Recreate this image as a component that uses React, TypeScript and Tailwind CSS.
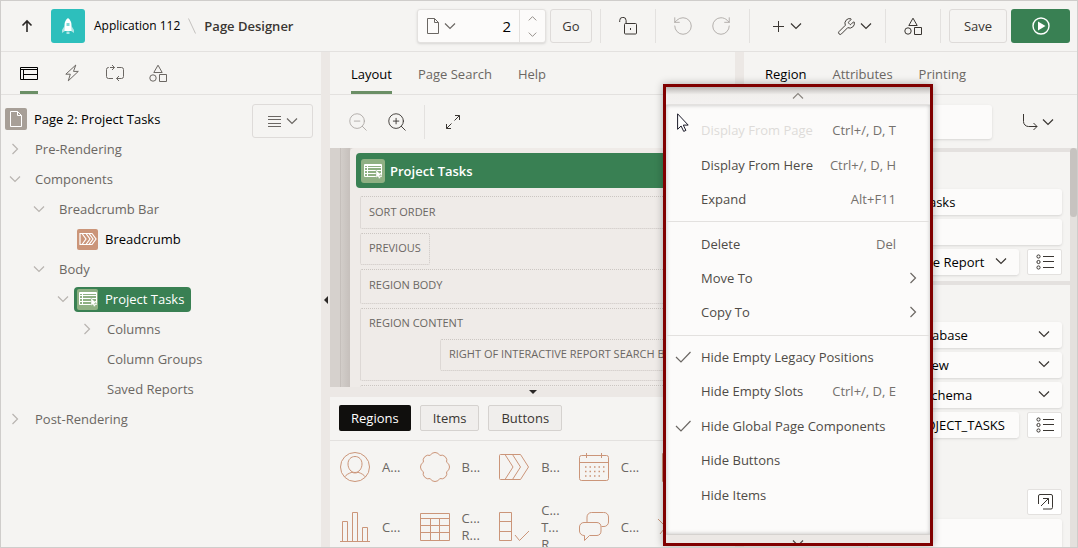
import React from "react";
import { RotateCcw, RotateCw, Wrench, ZoomIn, ZoomOut } from "lucide-react";

type IconProps = { className?: string };
type ChevronProps = { dir?: "up" | "down" | "right"; className?: string };

const CHEVRON_PATHS = {
  up: "M1 8.5l5-5 5 5",
  down: "M1 3.5l5 5 5-5",
  right: "M3.5 1l5 5-5 5",
};

const Chevron = ({ dir = "down", className = "size-3" }: ChevronProps) => (
  <svg viewBox="0 0 12 12" className={`shrink-0 ${className}`} fill="none" stroke="currentColor" strokeWidth="1.2">
    <path d={CHEVRON_PATHS[dir]} />
  </svg>
);

const ShapesIcon = ({ className = "" }: IconProps) => (
  <svg viewBox="0 0 18 18" className={`size-[18px] ${className}`} fill="none" stroke="currentColor">
    <path d="M9 1.2L13.2 8.5H4.8z" />
    <circle cx="4" cy="14" r="3.2" />
    <path d="M10.5 10.5h7v7h-7z" />
  </svg>
);

const PageIcon = ({ className = "" }: IconProps) => (
  <svg viewBox="0 0 14 18" className={`w-[14px] h-[18px] ${className}`} fill="none" stroke="currentColor">
    <path d="M1.5 1.5h7l4 4v11h-11zM8.5 1.5v4h4" />
  </svg>
);

const ReportIcon = () => (
  <svg viewBox="0 0 18 16" className="w-[18px] h-4" fill="none" stroke="#fff">
    <path d="M.5 1.5h17v12H.5zM.5 2.5h17M.5 4.5h17M.5 7.5h17M.5 10.5h17M3.5 1.5v12" />
    <path d="M12 7v7.8l1.8-1.6 1.2 2.6 1.6-.7-1.2-2.6h2.4z" fill="#fff" stroke="#8fb083" strokeWidth=".4" />
  </svg>
);

const ListIcon = () => (
  <svg viewBox="0 0 18 16" className="w-[18px] h-4" fill="none" stroke="currentColor">
    <circle cx="2.5" cy="2.5" r="1.6" />
    <circle cx="2.5" cy="8" r="1.6" />
    <circle cx="2.5" cy="13.5" r="1.6" />
    <path d="M7 2.5h11M7 7.5h11M7 13.5h11" />
  </svg>
);

const Divider = () => <span className="w-px h-[34px] bg-[#e3e1df]" />;

const Header = () => (
  <header className="flex items-center h-[51px] shrink-0 border-b border-[#e3e1df] pr-[7px]">
    <button aria-label="Up" className="ml-5 w-3 mr-[18px]">
      <svg viewBox="0 0 12 14" className="w-3 h-[14px]" fill="none" stroke="#2b2826" strokeWidth="1.6">
        <path d="M6 13V2M1.5 6.5L6 2l4.5 4.5" />
      </svg>
    </button>
    <span className="flex items-center justify-center size-[34px] rounded-[3px] bg-[#2dbfbc]">
      <svg viewBox="0 0 14 18" className="w-[14px] h-[18px]">
        <path d="M3.5 9L1 13v3l3-2zM10.5 9L13 13v3l-3-2z" fill="#a9e5e3" />
        <path d="M7 1c2.5 2 3.5 4 3.5 7v6h-7V8c0-3 1-5 3.5-7z" fill="#fff" />
        <path d="M5.5 6h3v3h-3z" fill="#7fd8d6" />
        <path d="M5.5 14.5h3v2.5h-3z" fill="#a9e5e3" />
      </svg>
    </span>
    <nav className="flex items-center ml-[9px] gap-2">
      <a href="#app" className="text-xs text-black">Application 112</a>
      <svg viewBox="0 0 8 16" className="w-2 h-4" stroke="#c4c1be">
        <path d="M.5.5l7 15" />
      </svg>
      <h1 className="font-semibold text-[#3a3632]">Page Designer</h1>
    </nav>

    <div className="flex items-center ml-auto text-[#3a3632]">
      <div className="flex items-stretch h-[34px] w-[129px] bg-[#fcfbfa] border border-[#e3e1df] rounded-[3px] shadow-sm">
        <button aria-label="Recent pages" className="flex items-center gap-1 pl-2 text-[#6b6763]">
          <PageIcon />
          <Chevron />
        </button>
        <input aria-label="Page number" defaultValue="2" className="flex-1 min-w-0 pr-2 text-right text-[15px] text-black bg-transparent" />
        <span className="flex flex-col justify-around items-center w-[26px] border-l border-[#e3e1df] text-[#8b8680]">
          <button aria-label="Next page" className="flex"><Chevron dir="up" className="size-[9px]" /></button>
          <button aria-label="Previous page" className="flex"><Chevron className="size-[9px]" /></button>
        </span>
      </div>
      <button className="ml-1 h-[34px] w-[42px] border border-[#dedbd9] rounded-[3px]">Go</button>
      <span className="ml-2 flex"><Divider /></span>
      <button aria-label="Unlock" className="flex justify-center w-[54px]">
        <svg viewBox="0 0 18 18" className="size-[18px]" fill="none" stroke="currentColor">
          <rect x="5.5" y="6.5" width="12" height="10.5" rx="1" />
          <path d="M.7 5V3.5a3.2 3.2 0 016.4 0v3M11.5 11v2" />
        </svg>
      </button>
      <Divider />
      <button aria-label="Undo" className="flex justify-center w-[38px] ml-2 text-[#aeaaa6]"><RotateCcw size={22} strokeWidth={1} /></button>
      <button aria-label="Redo" className="flex justify-center w-[38px] mr-[9px] text-[#aeaaa6]"><RotateCw size={22} strokeWidth={1} /></button>
      <Divider />
      <button aria-label="Create" className="flex items-center justify-center gap-[6px] w-[74px]">
        <svg viewBox="0 0 11 11" className="size-[11px]" stroke="currentColor">
          <path d="M5.5 0v11M0 5.5h11" />
        </svg>
        <Chevron />
      </button>
      <button aria-label="Utilities" className="flex items-center justify-center gap-1 w-[61px]">
        <Wrench size={19} strokeWidth={1.2} />
        <Chevron />
      </button>
      <Divider />
      <button aria-label="Shared Components" className="flex justify-center w-[54px]"><ShapesIcon /></button>
      <Divider />
      <button className="ml-2 h-[34px] w-[58px] border border-[#dedbd9] rounded-[3px]">Save</button>
      <button aria-label="Save and Run Page" className="ml-1 flex items-center justify-center h-[34px] w-[59px] rounded-[3px] bg-[#398053]">
        <svg viewBox="0 0 18 18" className="size-[18px]" fill="none" stroke="#fff" strokeWidth="1.4">
          <circle cx="9" cy="9" r="8" />
          <path d="M6 4.5l7.5 4.5L6 13.5z" fill="#fff" stroke="none" />
        </svg>
      </button>
    </div>
  </header>
);

const Tabs = ({ items }: { items: string[] }) => (
  <div role="tablist" className="flex items-stretch gap-[26px] h-[43px] shrink-0 border-b border-[#e3e1df] pl-[21px] text-[#6b6763]">
    {items.map((item, i) => (
      <button
        key={item}
        role="tab"
        className={i === 0 ? "pt-[5px] text-black border-b-[3px] border-[#6b8f66]" : "pt-[5px] border-b-[3px] border-transparent"}
      >
        {item}
      </button>
    ))}
  </div>
);

type TreeRow = { label: string; pad: string; arrow?: "down" | "right"; icon?: "crumb" | "report" };

const TREE: TreeRow[] = [
  { label: "Pre-Rendering", pad: "pl-[8px]", arrow: "right" },
  { label: "Components", pad: "pl-[8px]", arrow: "down" },
  { label: "Breadcrumb Bar", pad: "pl-[32px]", arrow: "down" },
  { label: "Breadcrumb", pad: "pl-[56px]", icon: "crumb" },
  { label: "Body", pad: "pl-[32px]", arrow: "down" },
  { label: "Project Tasks", pad: "pl-[56px]", arrow: "down", icon: "report" },
  { label: "Columns", pad: "pl-[80px]", arrow: "right" },
  { label: "Column Groups", pad: "pl-[80px]" },
  { label: "Saved Reports", pad: "pl-[80px]" },
  { label: "Post-Rendering", pad: "pl-[8px]", arrow: "right" },
];

const TreeLabel = ({ row }: { row: TreeRow }) => {
  if (row.icon === "crumb") {
    return (
      <span className="flex items-center gap-[7px] ml-2 text-black">
        <span className="flex items-center justify-center size-[21px] rounded-[2px] bg-[#cb9579]">
          <svg viewBox="0 0 18 14" className="w-[18px] h-[14px]" fill="none" stroke="#fff" strokeWidth="1.2">
            <path d="M1 1.5h12l4 5.5-4 5.5H1zM3 1.5L7 7l-4 5.5M7 1.5L11 7l-4 5.5M10 1.5L14 7l-4 5.5" />
          </svg>
        </span>
        {row.label}
      </span>
    );
  }
  if (row.icon === "report") {
    return (
      <span className="flex items-center gap-[7px] ml-[5px] h-[25px] pl-[3px] pr-[7px] rounded-[4px] bg-[#398053] font-medium text-white">
        <span className="flex items-center justify-center size-[21px] rounded-[2px] bg-[#8fb083]">
          <ReportIcon />
        </span>
        {row.label}
      </span>
    );
  }
  return <span className="ml-[14px]">{row.label}</span>;
};

const TreePanel = () => (
  <aside className="flex flex-col w-[320px] shrink-0">
    <div className="flex items-stretch gap-[25px] h-[43px] shrink-0 border-b border-[#e3e1df] pl-[19px] text-[#6b6763]">
      <button aria-label="Rendering" className="flex items-center w-[18px] pt-[2px] border-b-[3px] border-[#6b8f66] text-black">
        <svg viewBox="0 0 18 14" className="w-[18px] h-[14px]" fill="none" stroke="currentColor">
          <path d="M.5 1.5h17v12H.5zM.5 3.5h17M3.5 3.5v10M3.5 8.5h14" />
        </svg>
      </button>
      <button aria-label="Dynamic Actions" className="flex items-center justify-center w-[18px]">
        <svg viewBox="0 0 14 18" className="w-[14px] h-[18px]" fill="none" stroke="currentColor">
          <path d="M10.8 1L.8 10.2h4.5L3.3 16.8l10-9.4H8.500z" />
        </svg>
      </button>
      <button aria-label="Processing" className="flex items-center">
        <svg viewBox="0 0 18 18" className="size-[18px]" fill="none" stroke="currentColor">
          <path d="M3 3.5h-.5a2 2 0 00-2 2v7a2 2 0 002 2H7M4 3.5h4.5M6 1l2.5 2.5L6 6M11 3.5h4.5a2 2 0 012 2v7a2 2 0 01-2 2h-5M13 12l-2.5 2.5L13 17" />
        </svg>
      </button>
      <button aria-label="Page Shared Components" className="flex items-center"><ShapesIcon /></button>
    </div>
    <div className="flex items-center pl-1 pr-2 pt-[9px]">
      <span className="flex items-center justify-center size-[22px] mb-1 rounded-[2px] bg-[#a79f97] text-white">
        <PageIcon />
      </span>
      <span className="ml-[7px] mb-1 text-black">Page 2: Project Tasks</span>
      <button aria-label="Menu" className="flex items-center justify-center gap-[5px] ml-auto w-[61px] h-[34px] border border-[#dedbd9] rounded-[3px] text-[#6b6763]">
        <svg viewBox="0 0 13 11" className="w-[13px] h-[11px]" stroke="currentColor">
          <path d="M0 .5h13M0 3.5h13M0 7.5h13M0 10.5h13" />
        </svg>
        <Chevron />
      </button>
    </div>
    <ul className="-mt-1 text-[#6b6763]">
      {TREE.map((row) => (
        <li key={row.label} className={`flex items-center h-[30px] ${row.pad}`}>
          {row.arrow && <Chevron dir={row.arrow} className="size-3 text-[#b8b4b0]" />}
          {!row.arrow && <span className="w-3" />}
          <TreeLabel row={row} />
        </li>
      ))}
    </ul>
  </aside>
);

const Slot = ({ label, className = "" }: { label: string; className?: string }) => (
  <div className={`border border-dotted border-[#cbc6c2] rounded-[2px] px-2 text-[11px] text-[#6b6763] ${className}`}>{label}</div>
);

const Canvas = () => (
  <div className="flex flex-1 min-h-0 overflow-hidden bg-[#d6d1cd]">
    <div className="w-[11px] shrink-0 border-r border-[#c5bfbb]" />
    <div className="w-[9px] shrink-0 bg-linear-to-r from-[#d2cdc9] to-[#c6c0bc]" />
    <div className="flex-1 min-w-0 pl-[6px] pt-[5px] rounded-tl-[4px] bg-[#efebe8]">
      <div className="flex items-center h-[35px] pl-[5px] rounded-[4px] bg-[#398053] font-semibold text-white">
        <span className="flex items-center justify-center size-6 mr-[5px] rounded-[3px] bg-[#8fb083]">
          <ReportIcon />
        </span>
        Project Tasks
      </div>
      <div className="flex flex-col items-stretch gap-1 pl-1 pt-2">
        <Slot label="SORT ORDER" className="h-[33px] leading-[29px]" />
        <Slot label="PREVIOUS" className="h-[32px] leading-[28px] self-start" />
        <Slot label="REGION BODY" className="h-[35px] leading-[29px]" />
        <div className="flex flex-col h-[73px] border border-dotted border-[#cbc6c2] rounded-[2px] text-[11px] text-[#6b6763]">
          <span className="pl-2 leading-[28px] mb-[2px]">REGION CONTENT</span>
          <Slot label="RIGHT OF INTERACTIVE REPORT SEARCH BAR" className="ml-[79px] h-8 leading-[28px] whitespace-nowrap" />
        </div>
        <Slot label="" className="h-[33px] shrink-0" />
      </div>
    </div>
  </div>
);

const GALLERY: { name: string; lines: string[]; art: React.ReactNode }[] = [
  {
    name: "avatar",
    lines: ["A..."],
    art: (
      <>
        <circle cx="15" cy="15" r="14.5" />
        <path d="M15 4.5c4 0 7 3 7 7.5s-3 8.5-7 8.5-7-4-7-8.5 3-7.5 7-7.500zM4.5 25c2-2.5 4-3.5 7.5-4.8 1 1 5 1 6 0 3.5 1.3 5.5 2.3 7.5 4.8" />
      </>
    ),
  },
  {
    name: "badge",
    lines: ["B..."],
    art: (
      <path d="M10.2 3.4a5.4 5.4 0 019.6 0 5.4 5.4 0 016.8 6.800 5.4 5.400 0 010 9.600 5.400 5.400 0 01-6.800 6.800 5.400 5.400 0 01-9.600 0 5.400 5.400 0 01-6.800-6.800 5.400 5.400 0 010-9.600A5.400 5.400 0 0110.200 3.400z" />
    ),
  },
  {
    name: "breadcrumb",
    lines: ["B..."],
    art: <path d="M1.5 2.5h20l8 12.5-8 12.5h-20a1 1 0 01-1-1v-23a1 1 0 011-1zM6 2.5L14 15 6 27.5M13.5 2.5l8 12.5-8 12.5" />,
  },
  {
    name: "calendar",
    lines: ["C..."],
    art: (
      <>
        <rect x=".5" y="3.5" width="29" height="25" rx="2" />
        <path d="M.5 10.5h29M7.5 1v5M22.5 1v5" />
        <path d="M6 15h19.5M6 19.5h19.5M6 24h15" strokeDasharray="1.5 3" strokeWidth="1.5" />
      </>
    ),
  },
  { name: "cards", lines: ["C..."], art: <path d="M4.5 1.5h21v28h-21zM4.5 10.5h21M4.5 20.5h21" /> },
  {
    name: "chart",
    lines: ["C..."],
    art: <path d="M0 29.5h30M2.5 29.5v-20h5v20M12.5 29.5V.5h5v29M22.5 29.5v-14h5v14" />,
  },
  {
    name: "classic-report",
    lines: ["C...", "R..."],
    art: <path d="M.5 1.5h29v27H.5zM.5 6.5h29M.5 13.5h29M.5 20.5h29M10.5 6.5v22M19.5 6.5v22" />,
  },
  {
    name: "column-toggle",
    lines: ["C...", "T...", "R..."],
    art: <path d="M.5.5h12v28H.5zM.5 9.5h12M.5 19.5h12M16 23l4.5 5.5L30 19" />,
  },
  {
    name: "comments",
    lines: ["C..."],
    art: (
      <path d="M8 10V5a4.5 4.5 0 014.5-4.5h12A4.5 4.5 0 0129.5 5v5a4.5 4.5 0 01-4.5 4.5h-2.5M5 10.5h13a4.5 4.5 0 014 4.5v4a4.5 4.5 0 01-4 4.5h-7.5l-5 5v-5H5A4.5 4.5 0 01.5 19v-4A4.5 4.5 0 015 10.5z" />
    ),
  },
  { name: "data-profiler", lines: ["D..."], art: <path d="M0 7l6 6M2 22l4-5M26 7l-6 6M12 15h12" /> },
];

const GalleryPanel = () => (
  <section className="flex flex-col h-[150px] shrink-0 overflow-hidden">
    <div className="flex items-center gap-[9px] h-[44px] shrink-0 pl-[9px] pb-[2px] border-b border-[#e3e1df] text-[#3a3632]">
      <button className="h-[26px] px-3 rounded-[2px] bg-[#100f0d] font-medium text-white">Regions</button>
      <button className="h-[26px] px-3 rounded-[2px] border border-[#d5d2cf] bg-[#f0eeec]">Items</button>
      <button className="h-[26px] px-3 rounded-[2px] border border-[#d5d2cf] bg-[#f0eeec]">Buttons</button>
    </div>
    <div className="grid grid-cols-5 auto-rows-[60px] -mt-1 -mr-[3px] pl-[10px] text-[#6b6763]">
      {GALLERY.map((item) => (
        <div key={item.name} className="flex items-center gap-3">
          <svg viewBox="0 0 30 30" className="size-[30px] shrink-0" fill="none" stroke="#cb9579">
            {item.art}
          </svg>
          <span className="leading-[17px]">
            {item.lines.map((line, i) => (
              <span key={i} className="block">{line}</span>
            ))}
          </span>
        </div>
      ))}
    </div>
  </section>
);

const LayoutPanel = () => (
  <main className="flex flex-col flex-1 min-w-0">
    <Tabs items={["Layout", "Page Search", "Help"]} />
    <div className="flex items-center h-[53px] shrink-0 pl-[17px] text-[#3a3632]">
      <button aria-label="Zoom out" className="text-[#aeaaa6]"><ZoomOut size={22} strokeWidth={1} /></button>
      <button aria-label="Zoom in" className="ml-[17px] mr-4"><ZoomIn size={22} strokeWidth={1} /></button>
      <Divider />
      <button aria-label="Expand" className="ml-5">
        <svg viewBox="0 0 16 16" className="size-4" fill="none" stroke="currentColor">
          <path d="M9.5 6.5l5-5M10 1.5h4.5V6M6.5 9.5l-5 5M1.5 10v4.5H6" />
        </svg>
      </button>
    </div>
    <Canvas />
    <div className="flex items-center justify-center h-[10px] shrink-0 bg-[#ece8e5]">
      <svg viewBox="0 0 8 4" className="w-2 h-1" fill="#2b2826"><path d="M0 0h8L4 4z" /></svg>
    </div>
    <GalleryPanel />
  </main>
);

const FIELD = "h-[26px] bg-[#fcfbfa] rounded-[3px] shadow-sm text-black";

const SelectField = ({ label, value, className = "" }: { label: string; value: string; className?: string }) => (
  <label className={`relative flex min-w-0 ${className}`}>
    <span className="sr-only">{label}</span>
    <select className={`${FIELD} w-full appearance-none px-2`}>
      <option>{value}</option>
    </select>
    <Chevron className="absolute right-3 top-[6px] size-3 text-[#3a3632]" />
  </label>
);

const IconButton = ({ label, children }: { label: string; children: React.ReactNode }) => (
  <button aria-label={label} className="flex items-center justify-center w-[35px] h-[26px] ml-2 rounded-[2px] border border-[#e3e1df] bg-white text-[#3a3632]">
    {children}
  </button>
);

const PropertyPanel = () => (
  <aside className="flex flex-col w-[333px] shrink-0">
    <Tabs items={["Region", "Attributes", "Printing"]} />
    <div className="flex items-center h-[53px] shrink-0 pl-2 text-[#3a3632]">
      <input aria-label="Filter properties" className="h-[34px] w-[240px] bg-[#fcfbfa] rounded-[3px] shadow-sm" />
      <button aria-label="Go to group" className="flex items-center gap-1 ml-[30px]">
        <svg viewBox="0 0 16 16" className="size-4" fill="none" stroke="currentColor">
          <path d="M1.5 0v7.5a5 5 0 005 5H15M11.5 9l3.5 3.5-3.5 3.5" />
        </svg>
        <Chevron />
      </button>
    </div>
    <div className="flex flex-1 min-h-0">
      <div className="flex flex-col flex-1 min-w-0 overflow-hidden">
        <section className="flex flex-col gap-1 pt-[37px] pb-[6px] pl-[124px] pr-2 border-t-4 border-[#e4e1df]">
          <input aria-label="Title" defaultValue="Project Tasks" className={`${FIELD} px-2`} />
          <input aria-label="Source" className={`${FIELD} px-2`} />
          <div className="flex">
            <SelectField label="Type" value="Interactive Report" className="flex-1" />
            <IconButton label="Pick type"><ListIcon /></IconButton>
          </div>
        </section>
        <section className="flex flex-col gap-1 pt-[37px] pl-[124px] pr-2 border-t-4 border-[#e4e1df]">
          <SelectField label="Location" value="Local Database" />
          <SelectField label="Source type" value="Table / View" />
          <SelectField label="Table owner" value="Parsing Schema" />
          <div className="flex">
            <input aria-label="Table name" defaultValue="EBA_PROJECT_TASKS" className={`${FIELD} flex-1 min-w-0 pl-3`} />
            <IconButton label="Pick table"><ListIcon /></IconButton>
          </div>
          <div className="flex justify-end mt-[47px]">
            <IconButton label="Open editor">
              <svg viewBox="0 0 16 16" className="size-4" fill="none" stroke="currentColor">
                <path d="M1.5 10V2A1.5 1.5 0 013 .5h11A1.5 1.5 0 0115.5 2v11.5a1.5 1.5 0 01-1.5 1.5H6M4 12l7.5-7.5M6 4.5h5.5V10" />
              </svg>
            </IconButton>
          </div>
          <textarea aria-label="Where clause" className="h-[60px] bg-[#fcfbfa] rounded-[3px] shadow-sm" />
        </section>
      </div>
      <div className="w-[7px] bg-[#e4e0dd]">
        <div className="h-[69px] rounded-[4px] bg-[#c7c3c0]" />
      </div>
    </div>
  </aside>
);

type MenuEntry = { label: string; keys?: string; sub?: boolean; checked?: boolean; disabled?: boolean } | null;

// null draws a separator
const MENU: MenuEntry[] = [
  { label: "Display From Page", keys: "Ctrl+/, D, T", disabled: true },
  { label: "Display From Here", keys: "Ctrl+/, D, H" },
  { label: "Expand", keys: "Alt+F11" },
  null,
  { label: "Delete", keys: "Del" },
  { label: "Move To", sub: true },
  { label: "Copy To", sub: true },
  null,
  { label: "Hide Empty Legacy Positions", checked: true },
  { label: "Hide Empty Slots", keys: "Ctrl+/, D, E" },
  { label: "Hide Global Page Components", checked: true },
  { label: "Hide Buttons" },
  { label: "Hide Items" },
];

const ContextMenu = () => (
  <div className="absolute top-[83px] bottom-px right-[144px] flex flex-col w-[270px] border-[3px] border-[#800000] bg-[#fcfbfa] shadow-[0_0_8px_rgba(0,0,0,0.3)]">
    <button aria-label="Scroll up" className="flex items-center justify-center h-[18px] shrink-0 border-b border-[#e3e1df] bg-linear-to-b from-[#b9b5b3] via-[#f1efed] via-45% to-[#f3f1f0] text-[#8b8680]">
      <Chevron dir="up" />
    </button>
    <div role="menu" className="flex flex-col flex-1 min-h-0 pt-2 pb-[22px] text-[#4f4b47] shadow-[inset_0_0_4px_rgba(0,0,0,0.25)]">
      {MENU.map((entry, i) =>
        entry ? (
          <button key={i} role="menuitem" disabled={entry.disabled} className="flex flex-1 items-center pl-[9px] pr-[11px]">
            <span className="w-[26px] shrink-0">
              {entry.checked && (
                <svg viewBox="0 0 16 12" className="w-4 h-3" fill="none" stroke="#6b6763" strokeWidth="1.2">
                  <path d="M1 6l5 5L15.5 1" />
                </svg>
              )}
            </span>
            <span className={entry.disabled ? "text-[#dedbd9]" : ""}>{entry.label}</span>
            <span className="ml-auto mr-[23px] text-[#75716d]">{entry.keys}</span>
            {entry.sub && <Chevron dir="right" className="size-3 -ml-3 text-[#6b6763]" />}
          </button>
        ) : (
          <div key={i} role="separator" className="my-1 h-[2px] shrink-0 border-b border-[#e3e1df]" />
        )
      )}
    </div>
    <button aria-label="Scroll down" className="flex items-start justify-center h-[9px] shrink-0 overflow-hidden border-t border-[#d5d2cf] bg-[#ece8e5] text-[#4f4b47]">
      <Chevron className="size-3 mt-[2px]" />
    </button>
    <svg viewBox="0 0 12 19" className="absolute left-[11px] top-[26px] w-3 h-[19px]" fill="#fff" stroke="#1b1a28">
      <path d="M.6.8v15.5l3.5-3.3 2.6 5.4 2.2-1-2.6-5.3h4.9z" />
    </svg>
  </div>
);

export default function App() {
  return (
    <div className="relative flex flex-col h-screen overflow-hidden border border-[#cfcdcb] bg-[#f5f4f2] font-['Open_Sans',sans-serif] text-[13px] leading-5">
      <Header />
      <div className="flex flex-1 min-h-0">
        <TreePanel />
        <div className="flex items-center justify-end w-[9px] shrink-0 pr-[2px] bg-[#ece8e5]">
          <svg viewBox="0 0 4 8" className="w-1 h-2" fill="#2b2826"><path d="M4 0v8L0 4z" /></svg>
        </div>
        <LayoutPanel />
        <div className="w-[9px] shrink-0 bg-[#ece8e5]" />
        <PropertyPanel />
      </div>
      <ContextMenu />
    </div>
  );
}
